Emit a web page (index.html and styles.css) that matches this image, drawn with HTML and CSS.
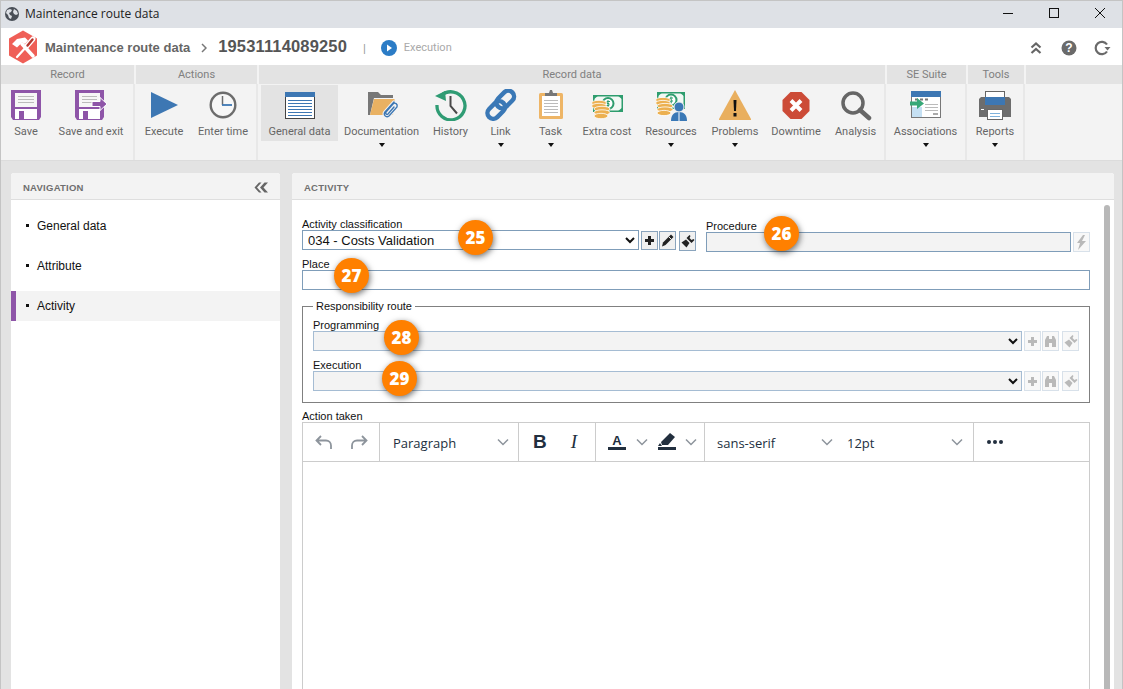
FILE: index.html
```html
<!DOCTYPE html>
<html lang="en">
<head>
<meta charset="utf-8">
<title>Maintenance route data</title>
<link rel="stylesheet" href="styles.css">
</head>
<body>
<div class="window">
  <div class="titlebar">
    <svg class="globe" width="16" height="16" viewBox="0 0 16 16"><circle cx="8" cy="8" r="7" fill="#4a4f57"/><path d="M3 4l3-1 2 1-1 2-2 1 1 2 2 1-1 3-2-1-1-3-2-2zM10 3l3 2 1 3-2 1-2-1-1-2z" fill="#dee1e6"/></svg>
    <span class="title-text">Maintenance route data</span>
    <div class="win-controls">
      <svg width="46" height="24" viewBox="0 0 46 24"><path d="M18 12.500h10" stroke="#111" fill="none"/></svg>
      <svg width="46" height="24" viewBox="0 0 46 24"><rect x="18.500" y="7.500" width="9" height="9" stroke="#111" fill="none"/></svg>
      <svg width="46" height="24" viewBox="0 0 46 24"><path d="M18 7l10 10M28 7l-10 10" stroke="#111" fill="none"/></svg>
    </div>
  </div>
  <div class="header">
    <svg class="logo" width="30" height="34" viewBox="0 0 30 34">
      <path d="M15 0.500l14 8v17l-14 8-14-8v-17z" fill="#ef5f57"/>
      <path d="M4 14l5-5 8-1.500 3 3-3 3.500-3-1.500-3 3-2 2z" fill="#fff"/>
      <path d="M14 14l11 12" stroke="#fff" stroke-width="3.500" stroke-linecap="round"/>
      <path d="M9 27l10-11" stroke="#fff" stroke-width="2.200" stroke-linecap="round"/>
      <path d="M18 17l7-8" stroke="#fff" stroke-width="5" stroke-linecap="round"/>
      <path d="M19.500 15.500l5-6" stroke="#b5372f" stroke-width="2.400" stroke-linecap="round"/>
    </svg>
    <span class="crumb">Maintenance route data</span>
    <svg class="crumb-sep" width="6" height="10" viewBox="0 0 6 10"><path d="M1 1l4 4-4 4" stroke="#777" stroke-width="1.500" fill="none"/></svg>
    <span class="record-id">19531114089250</span>
    <span class="pipe">|</span>
    <svg class="status-icon" width="16" height="16" viewBox="0 0 16 16"><circle cx="8" cy="8" r="8" fill="#2b7cc6"/><path d="M6 4.500l5 3.500-5 3.500z" fill="#fff"/></svg>
    <span class="status-text">Execution</span>
    <div class="header-tools">
      <svg width="14" height="14" viewBox="0 0 14 14"><path d="M2.500 6.500l4.500-4 4.500 4M2.500 12l4.500-4 4.500 4" stroke="#666" stroke-width="2.200" fill="none"/></svg>
      <svg width="16" height="16" viewBox="0 0 16 16"><circle cx="8" cy="8" r="7.500" fill="#6a6a6a"/><text x="8" y="12" class="help-mark">?</text></svg>
      <svg width="18" height="16" viewBox="0 0 18 16"><path d="M14 11.500a6.200 6.200 0 1 1 0-7" stroke="#6a6a6a" stroke-width="2.200" fill="none"/><path d="M11.500 7h6l-3 3.500z" fill="#6a6a6a"/></svg>
    </div>
  </div>

  <div class="ribbon">
    <section class="group g-record">
      <h3>Record</h3>
      <div class="group-body">
        <button class="rb w50"><svg width="32" height="32" viewBox="0 0 32 32"><path d="M1 1h30v27l-2 3H3l-2-3z" fill="#8e55a8"/><rect x="5" y="4" width="22" height="14" fill="#f6f6f6"/><path d="M8 7.500h16M8 10.500h16M8 13.500h16" stroke="#bbb"/><rect x="5" y="20" width="22" height="10" fill="#fff"/><rect x="9" y="22" width="5" height="8" fill="#8e55a8"/></svg><span>Save</span></button>
        <button class="rb w80"><svg width="34" height="32" viewBox="0 0 34 32"><path d="M1 1h29v27l-2 3H3l-2-3z" fill="#8e55a8"/><rect x="5" y="4" width="21" height="14" fill="#f6f6f6"/><path d="M8 7.500h15M8 10.500h15M8 13.500h10" stroke="#bbb"/><rect x="5" y="20" width="21" height="10" fill="#fff"/><rect x="9" y="22" width="5" height="8" fill="#8e55a8"/><path d="M18 12.500h8v-4l7 6.500-7 6.500v-4h-8z" fill="#8e55a8" stroke="#fff"/></svg><span>Save and exit</span></button>
      </div>
    </section>
    <section class="group g-actions">
      <h3>Actions</h3>
      <div class="group-body">
        <button class="rb w56"><svg width="32" height="32" viewBox="0 0 32 32"><path d="M3 3l27 13-27 13z" fill="#3d77b3"/></svg><span>Execute</span></button>
        <button class="rb w62"><svg width="32" height="32" viewBox="0 0 32 32"><circle cx="16" cy="16" r="12.300" fill="#f7f7f7" stroke="#6c6c6c" stroke-width="2.400"/><path d="M15.500 7v9" stroke="#6c6c6c" stroke-width="1.500"/><path d="M15 16h10" stroke="#3d77b3" stroke-width="1.800"/></svg><span>Enter time</span></button>
      </div>
    </section>
    <section class="group g-data">
      <h3>Record data</h3>
      <div class="group-body">
        <button class="rb w77 active"><svg width="32" height="32" viewBox="0 0 32 32"><rect x="1.500" y="3.500" width="29" height="26" fill="#fff" stroke="#444"/><rect x="1" y="3" width="30" height="5" fill="#3d77b3"/><path d="M4 11.500h24M4 14.500h24M4 17.500h24M4 20.500h24M4 23.500h24M4 26.500h24" stroke="#3d77b3"/></svg><span>General data</span></button>
        <button class="rb w87 dd"><svg width="34" height="32" viewBox="0 0 34 32"><path d="M3 3h10l3 3h12v3H9L5 26H3z" fill="#777"/><path d="M9 10h20l1 1-2 15H5z" fill="#e9b162"/><g fill="none" stroke-linecap="round"><path d="M29 13l-9 10c-2 3 1 6 4 4l8-9c1-3-2-5-4-3l-7 8c-1 2 1 3 2 2l6-7" stroke="#f3f3f3" stroke-width="3.500"/><path d="M29 13l-9 10c-2 3 1 6 4 4l8-9c1-3-2-5-4-3l-7 8c-1 2 1 3 2 2l6-7" stroke="#3d77b3" stroke-width="1.400"/></g></svg><span>Documentation</span><i class="caret"></i></button>
        <button class="rb w51"><svg width="32" height="32" viewBox="0 0 32 32"><path d="M6.500 6.500a14 14 0 1 1-4.500 9.500" fill="none" stroke="#2f9c74" stroke-width="3.300"/><path d="M0 7l10-5 1 10z" fill="#2f9c74"/><path d="M15.500 7v10l6.500 7.500" fill="none" stroke="#4a4a4a" stroke-width="2"/></svg><span>History</span></button>
        <button class="rb w49 dd"><svg width="32" height="32" viewBox="0 0 32 32"><g fill="none" stroke="#3a78b6" stroke-width="4.500"><rect x="14.500" y="0.500" width="11.500" height="20" rx="5.700" transform="rotate(45 20.250 10.500)"/><rect x="5.500" y="11" width="11.500" height="20" rx="5.700" transform="rotate(45 11.250 21)"/></g></svg><span>Link</span><i class="caret"></i></button>
        <button class="rb w51 dd"><svg width="32" height="32" viewBox="0 0 32 32"><rect x="4" y="4" width="24" height="26" rx="1.500" fill="#eeb566"/><rect x="7" y="7" width="18" height="20" fill="#fff"/><path d="M9 11.500h14M9 14.500h14M9 17.500h14M9 20.500h14M9 23.500h14" stroke="#bbb"/><path d="M10 7V4h4l1-3h2l1 3h4v3z" fill="#777"/></svg><span>Task</span><i class="caret"></i></button>
        <button class="rb w62"><svg width="34" height="32" viewBox="0 0 34 32"><rect x="3" y="6" width="30" height="17" fill="#2e9d6e"/><rect x="4.500" y="7.500" width="27" height="14" fill="#f2f8f4"/><path d="M3 6h6l-6 5zM33 6h-6l6 5zM3 23h6l-6-5zM33 23h-6l6-5z" fill="#2e9d6e"/><circle cx="18" cy="14.500" r="5.500" fill="#fff" stroke="#2e9d6e" stroke-width="2"/><path d="M20 12.500h-3v2h2v2h-3M18 11v7" stroke="#2e9d6e" fill="none"/><g fill="#ecb050" stroke="#fff" stroke-width=".8"><ellipse cx="9" cy="14" rx="7.500" ry="2.700"/><ellipse cx="9" cy="17" rx="7.500" ry="2.700"/><ellipse cx="12" cy="20" rx="8" ry="2.700"/><ellipse cx="12" cy="23.500" rx="8" ry="2.700"/><ellipse cx="11" cy="27" rx="7" ry="2.700"/></g></svg><span>Extra cost</span></button>
        <button class="rb w66 dd"><svg width="34" height="32" viewBox="0 0 34 32"><rect x="3" y="3" width="28" height="17" fill="#2e9d6e"/><rect x="4.500" y="4.500" width="25" height="14" fill="#f2f8f4"/><path d="M3 3h6l-6 5zM31 3h-6l6 5z" fill="#2e9d6e"/><circle cx="17" cy="11" r="5.500" fill="#fff" stroke="#2e9d6e" stroke-width="2"/><path d="M19 9h-3v2h2v2h-3M17 7.500v7" stroke="#2e9d6e" fill="none"/><g fill="#ecb050" stroke="#fff" stroke-width=".8"><ellipse cx="9" cy="11" rx="7.500" ry="2.600"/><ellipse cx="9" cy="14" rx="7.500" ry="2.600"/><ellipse cx="11" cy="17" rx="8" ry="2.600"/><ellipse cx="11" cy="20.500" rx="8" ry="2.600"/><ellipse cx="10" cy="24" rx="7" ry="2.600"/></g><circle cx="25" cy="18" r="5" fill="#3a78b6" stroke="#f3f3f3"/><path d="M17 32c0-6 3-9 8-9s8 3 8 9z" fill="#3a78b6"/><path d="M25 23v9" stroke="#fff"/></svg><span>Resources</span><i class="caret"></i></button>
        <button class="rb w62 dd"><svg width="32" height="32" viewBox="0 0 32 32"><path d="M16 1l16 29c0 1 0 1-1 1H1c-1 0-1 0-1-1z" fill="#e9af5e"/><path d="M14.500 11h3l-.5 11h-2z" fill="#111"/><rect x="14.500" y="24" width="3" height="3.500" fill="#111"/></svg><span>Problems</span><i class="caret"></i></button>
        <button class="rb w60"><svg width="32" height="32" viewBox="0 0 32 32"><path d="M10.500 3h11l8 8v11l-8 8h-11l-8-8V11z" fill="#cc4b37"/><path d="M11 11.500l10 10M21 11.500l-10 10" stroke="#fff" stroke-width="4"/></svg><span>Downtime</span></button>
        <button class="rb w59"><svg width="32" height="32" viewBox="0 0 32 32"><circle cx="13" cy="14" r="10" fill="none" stroke="#666" stroke-width="3.500"/><path d="M20 21l9 8" stroke="#666" stroke-width="4.500" stroke-linecap="round"/></svg><span>Analysis</span></button>
      </div>
    </section>
    <section class="group g-suite">
      <h3>SE Suite</h3>
      <div class="group-body">
        <button class="rb w77 dd"><svg width="32" height="32" viewBox="0 0 32 32"><rect x="1.500" y="2.500" width="29" height="26" fill="#fff" stroke="#777"/><rect x="1" y="2" width="30" height="6" fill="#3d77b3"/><rect x="2" y="18" width="10" height="10" fill="#c5e0f3"/><path d="M5 10.500h3M10 10.500h3M15 10.500h3" stroke="#777" stroke-width="2"/><path d="M15 15.500h13M15 18.500h13M15 21.500h13" stroke="#bbb"/><rect x="23" y="24" width="5" height="2" fill="#aaa"/><path d="M0 12.500h7V9l7 5.500-7 5.500v-3.500H0z" fill="#37a878"/></svg><span>Associations</span><i class="caret"></i></button>
      </div>
    </section>
    <section class="group g-tools">
      <h3>Tools</h3>
      <div class="group-body">
        <button class="rb w54 dd"><svg width="32" height="32" viewBox="0 0 32 32"><rect x="6.500" y="2.500" width="19" height="10" fill="#fff" stroke="#666"/><path d="M2 8h28l2 2v18H0V10z" fill="#6d6d6d"/><path d="M6 8h20v8H6z" fill="#3d77b3"/><rect x="2" y="20" width="3" height="1" fill="#fff"/><rect x="8.500" y="20.500" width="15" height="10" fill="#fff" stroke="#666"/><path d="M11 24.500h10M11 27.500h10" stroke="#7fb2dc"/></svg><span>Reports</span><i class="caret"></i></button>
      </div>
    </section>
    <section class="group g-rest">
      <h3>&nbsp;</h3>
      <div class="group-body"></div>
    </section>
  </div>

  <div class="main">
    <aside class="panel nav">
      <div class="panel-head"><span>NAVIGATION</span>
        <svg width="14" height="11" viewBox="0 0 14 11"><path d="M5 0.500L0.500 5.500 5 10.500h2.500L3 5.500l4.500-5zM10.500 0.500L6 5.500l4.500 5H14L9.500 5.500l4.500-5z" fill="#666"/></svg>
      </div>
      <ul class="nav-list">
        <li>General data</li>
        <li>Attribute</li>
        <li class="current">Activity</li>
      </ul>
    </aside>

    <section class="panel activity">
      <div class="panel-head"><span>ACTIVITY</span></div>
      <div class="scrollbar"></div>
      <div class="form">
        <div class="row-top">
          <div class="col-class">
            <label>Activity classification</label>
            <div class="ctl-line">
              <select class="field sel-class"><option>034 - Costs Validation</option></select>
              <button class="mini"><svg width="11" height="11" viewBox="0 0 11 11"><path d="M4 1h3v3h3v3H7v3H4V7H1V4h3z" fill="#222"/></svg></button>
              <button class="mini"><svg width="13" height="13" viewBox="0 0 13 13"><path d="M10 0.500l2.500 2.500L4.500 11 1 12.500 2 8.500z" fill="#222"/><path d="M8 3l2.500 2.500" stroke="#f0f0f0"/></svg></button>
              <button class="mini gap"><svg width="14" height="14" viewBox="0 0 14 14"><path d="M8.500 1l1 1-1 2 2 2 2-1 1 1-3 3-5-5z" fill="#222"/><path d="M5 5.500l3.500 3.500-3 4.500-5-5z" fill="#222"/></svg></button>
            </div>
          </div>
          <div class="col-proc">
            <label>Procedure</label>
            <div class="ctl-line">
              <input class="field dim grow" type="text">
              <button class="mini off"><svg width="11" height="15" viewBox="0 0 11 15"><path d="M7 0L1 8h3l-2 7 8-9H6l3-6z" fill="#b9b9b9"/></svg></button>
            </div>
          </div>
        </div>
        <div class="row-place">
          <label>Place</label>
          <input class="field place" type="text">
        </div>
        <fieldset class="route">
          <legend>Responsibility route</legend>
          <div class="route-row">
            <label>Programming</label>
            <div class="ctl-line">
              <select class="field dim pale grow"><option></option></select>
              <button class="mini off"><svg width="11" height="11" viewBox="0 0 11 11"><path d="M4 1h3v3h3v3H7v3H4V7H1V4h3z" fill="#b9b9b9"/></svg></button>
              <button class="mini off"><svg width="13" height="13" viewBox="0 0 13 13"><path d="M1 12V5l2-4h2v11zM8 12V1h2l2 4v7zM5 4h3v4H5z" fill="#b9b9b9"/></svg></button>
              <button class="mini off gap"><svg width="14" height="14" viewBox="0 0 14 14"><path d="M8.500 1l1 1-1 2 2 2 2-1 1 1-3 3-5-5z" fill="#b9b9b9"/><path d="M5 5.500l3.500 3.500-3 4.500-5-5z" fill="#b9b9b9"/></svg></button>
            </div>
          </div>
          <div class="route-row">
            <label>Execution</label>
            <div class="ctl-line">
              <select class="field dim pale grow"><option></option></select>
              <button class="mini off"><svg width="11" height="11" viewBox="0 0 11 11"><path d="M4 1h3v3h3v3H7v3H4V7H1V4h3z" fill="#b9b9b9"/></svg></button>
              <button class="mini off"><svg width="13" height="13" viewBox="0 0 13 13"><path d="M1 12V5l2-4h2v11zM8 12V1h2l2 4v7zM5 4h3v4H5z" fill="#b9b9b9"/></svg></button>
              <button class="mini off gap"><svg width="14" height="14" viewBox="0 0 14 14"><path d="M8.500 1l1 1-1 2 2 2 2-1 1 1-3 3-5-5z" fill="#b9b9b9"/><path d="M5 5.500l3.500 3.500-3 4.500-5-5z" fill="#b9b9b9"/></svg></button>
            </div>
          </div>
        </fieldset>
        <div class="row-action">
          <label>Action taken</label>
          <div class="editor">
            <div class="toolbar">
              <div class="tb-group tb-history">
                <svg width="20" height="18" viewBox="0 0 20 18"><path d="M7 3L2.500 7.500 7 12M3 7.500h9a5 5 0 0 1 5 5V16" fill="none" stroke="#8d949c" stroke-width="1.800"/></svg>
                <svg width="20" height="18" viewBox="0 0 20 18"><path d="M13 3l4.500 4.500L13 12M17 7.500H8a5 5 0 0 0-5 5V16" fill="none" stroke="#8d949c" stroke-width="1.800"/></svg>
              </div>
              <div class="tb-group tb-para"><span>Paragraph</span><svg class="chev" width="12" height="8" viewBox="0 0 12 8"><path d="M1 1.500l5 5 5-5" fill="none" stroke="#8d949c" stroke-width="1.500"/></svg></div>
              <div class="tb-group tb-format">
                <b class="bold">B</b><i class="ital">I</i>
              </div>
              <div class="tb-group tb-color">
                <svg width="20" height="20" viewBox="0 0 20 20"><text x="10" y="13" class="a-mark">A</text><rect x="1" y="15" width="18" height="3" fill="#222f3e"/></svg>
                <svg class="chev c1" width="12" height="8" viewBox="0 0 12 8"><path d="M1 1.500l5 5 5-5" fill="none" stroke="#8d949c" stroke-width="1.500"/></svg>
                <svg class="hl" width="20" height="20" viewBox="0 0 20 20"><path d="M13 1l5 4-7 8H5l-1-3zM3 11l2 3H1z" fill="#222f3e"/><rect x="1" y="15" width="18" height="3" fill="#222f3e"/></svg>
                <svg class="chev c1" width="12" height="8" viewBox="0 0 12 8"><path d="M1 1.500l5 5 5-5" fill="none" stroke="#8d949c" stroke-width="1.500"/></svg>
              </div>
              <div class="tb-group tb-font">
                <span class="font-name">sans-serif</span><svg class="chev" width="12" height="8" viewBox="0 0 12 8"><path d="M1 1.500l5 5 5-5" fill="none" stroke="#8d949c" stroke-width="1.500"/></svg>
                <span class="font-size">12pt</span><svg class="chev" width="12" height="8" viewBox="0 0 12 8"><path d="M1 1.500l5 5 5-5" fill="none" stroke="#8d949c" stroke-width="1.500"/></svg>
              </div>
              <div class="tb-group tb-more"><svg width="18" height="6" viewBox="0 0 18 6"><circle cx="3" cy="3" r="2" fill="#222f3e"/><circle cx="9" cy="3" r="2" fill="#222f3e"/><circle cx="15" cy="3" r="2" fill="#222f3e"/></svg></div>
            </div>
          </div>
        </div>
      </div>
      <span class="badge b25">25</span>
      <span class="badge b26">26</span>
      <span class="badge b27">27</span>
      <span class="badge b28">28</span>
      <span class="badge b29">29</span>
    </section>
  </div>
</div>
</body>
</html>
```
FILE: styles.css
```css
* { box-sizing: border-box; }
html, body { margin: 0; padding: 0; height: 100%; overflow: hidden; }
body { font-family: "Liberation Sans", Arial, sans-serif; background: #e3e3e3; color: #111; }
.window { height: 689px; border: 1px solid #c4c4c4; border-bottom: 0; display: flex; flex-direction: column; overflow: hidden; background: #e3e3e3; }

.titlebar { height: 27px; flex: none; background: #dee1e6; display: flex; align-items: center; padding: 0 0 2px 3px; }
.globe { flex: none; }
.title-text { margin-left: 5px; font: 12px "Open Sans", sans-serif; color: #222; }
.win-controls { margin: -2px -1px 0 auto; display: flex; }
.win-controls svg { display: block; }

.header { height: 37px; flex: none; background: #fff; display: flex; align-items: center; padding: 2px 0 0 7px; }
.logo { flex: none; margin-top: -2px; }
.crumb { margin-left: 7px; font-size: 13px; font-weight: bold; color: #666; }
.crumb-sep { margin-left: 11px; }
.record-id { margin-left: 11px; font-size: 16.500px; letter-spacing: .15px; font-weight: bold; color: #555; position: relative; top: -1px; }
.pipe { margin-left: 16px; font-size: 11px; color: #999; }
.status-icon { margin-left: 15px; }
.status-text { margin-left: 7px; font: 11px Roboto, sans-serif; color: #a9a9a9; }
.header-tools { margin-left: auto; display: flex; align-items: center; gap: 18px; padding-right: 11px; }
.header-tools svg:nth-child(2) { margin-right: -2px; }
.help-mark { font: bold 12px "Liberation Sans", sans-serif; fill: #fff; text-anchor: middle; }

.ribbon { height: 96px; flex: none; display: flex; background: #f3f3f3; border-bottom: 1px solid #dcdcdc; }
.group { display: flex; flex-direction: column; flex: none; }
.group h3 { margin: 0 2px 0 0; height: 19px; flex: none; background: #e3e3e3; font: 11px/19px Roboto, sans-serif; color: #808080; text-align: center; }
.group-body { flex: 1; display: flex; margin-right: 1px; border-right: 2px solid #e8e8e8; align-items: flex-start; padding-top: 1px; }
.g-record { width: 135px; }
.g-actions { width: 123px; }
.g-data { width: 628px; }
.g-data .group-body { padding-left: 2px; }
.g-suite { width: 81px; }
.g-tools { width: 58px; }
.g-rest { flex: 1; }
.g-rest h3 { margin-right: 0; }
.g-rest .group-body { border: 0; margin: 0; }

.rb { border: 0; background: none; padding: 4px 0 0; height: 56px; display: flex; flex-direction: column; align-items: center; font: 11px Roboto, sans-serif; color: #666; position: relative; flex: none; }
.rb svg { display: block; height: 32px; flex: none; }
.rb span { margin-top: 4px; white-space: nowrap; line-height: 13px; }
.rb.active { background: #e3e3e3; }
.caret { position: absolute; top: 58px; left: 50%; margin-left: -3px; width: 0; height: 0; border: 3px solid transparent; border-top: 4px solid #111; border-bottom: 0; }
.w49 { width: 49px; } .w50 { width: 50px; } .w51 { width: 51px; } .w54 { width: 54px; }
.w56 { width: 56px; } .w59 { width: 59px; } .w60 { width: 60px; } .w62 { width: 62px; }
.w66 { width: 66px; } .w77 { width: 77px; } .w80 { width: 80px; } .w87 { width: 87px; }

.main { flex: 1; min-height: 0; display: flex; gap: 12px; padding: 12px 8px 0 10px; }
.panel { background: #fff; border-radius: 3px 3px 0 0; display: flex; flex-direction: column; }
.nav { width: 269px; flex: none; }
.activity { flex: 1; position: relative; min-width: 0; }
.panel-head { height: 27px; flex: none; background: #f3f3f3; border-bottom: 1px solid #dedede; display: flex; align-items: center; justify-content: space-between; padding: 2px 12px 0; font-size: 9.500px; font-weight: bold; color: #6f6f6f; letter-spacing: .25px; border-radius: 3px 3px 0 0; }
.nav-list { list-style: none; margin: 0; padding: 6px 0 0; }
.nav-list li { height: 40px; font-size: 12px; color: #111; display: flex; align-items: center; padding-left: 26px; position: relative; }
.nav-list li::before { content: ""; position: absolute; left: 15px; top: 18px; width: 3px; height: 3px; background: #111; }
.nav-list .current { height: 30px; margin-top: 5px; background: #f3f3f3; border-left: 5px solid #8e55a8; padding-left: 21px; }
.nav-list .current::before { left: 10px; top: 13px; }

.scrollbar { position: absolute; right: 4px; top: 32px; bottom: 0; width: 6px; background: #b8b8b8; border-radius: 3px 3px 0 0; }
.form { padding: 18px 24px 0 10px; display: flex; flex-direction: column; }
label { display: block; font-size: 11px; line-height: 12px; color: #111; white-space: nowrap; }
.ctl-line { display: flex; align-items: flex-start; }
.field { height: 20px; border: 1px solid #7f9db9; background: #fff; padding: 0; margin: 0; border-radius: 0; font: 12px "Liberation Sans", sans-serif; color: #111; display: block; }
.dim { background: #f3f3f3; }
.pale { border-color: #a5bcd3; }
.grow { flex: 1; min-width: 0; }
.row-top { display: flex; }
.col-class { width: 404px; flex: none; }
.sel-class { width: 337px; padding-left: 1px; font-size: 13px; }
.col-proc { flex: 1; min-width: 0; padding-top: 1px; }
.col-proc label { margin-top: 1px; }
.mini { width: 17px; height: 19px; margin: 1px 0 0 2px; padding: 0; border: 1px solid #8aa4bd; background: #f0f0f0; display: flex; align-items: center; justify-content: center; flex: none; }
.mini + .mini { margin-left: 1px; }
.mini.gap { margin-left: 3px; height: 20px; }
.off { border-color: #d8e1ea; background: #f8f8f8; margin-top: 0; height: 20px; width: 17px; }
.row-place { margin-top: 6px; }
.place { width: 100%; }
.route { margin: 10px 0 0; padding: 7px 10px 0; height: 103px; border: 1px solid #808080; min-width: 0; position: relative; }
.route legend { padding: 0 3px; margin-left: 0; font-size: 11px; line-height: 12px; color: #111; }
.route-row { margin-bottom: 8px; }
.row-action { margin-top: 7px; }
.editor { border: 1px solid #ccc; height: 300px; }
.toolbar { height: 39px; border-bottom: 1px solid #ccc; display: flex; font: 13px "Open Sans", sans-serif; color: #222f3e; }
.toolbar span { margin-top: 2px; }
.tb-group { display: flex; align-items: center; border-right: 1px solid #ccc; flex: none; }
.tb-history { width: 77px; padding-left: 11px; gap: 15px; }
.tb-para { width: 139px; padding-left: 13px; }
.tb-para .chev { margin-left: 41px; }
.tb-format { width: 77px; padding-left: 14px; font-size: 18px; }
.bold { font: bold 19px "Liberation Sans", sans-serif; }
.ital { font: italic 19px "Liberation Serif", serif; margin-left: 24px; }
.tb-color { width: 109px; padding-left: 11px; }
.tb-color .c1 { margin-left: 9px; }
.tb-color .hl { margin-left: 9px; }
.tb-color .hl + .c1 { margin-left: 8px; }
.a-mark { font: bold 13px "Liberation Sans", sans-serif; fill: #222f3e; text-anchor: middle; }
.tb-font { width: 269px; padding-left: 12px; }
.tb-font .font-name { width: 104px; }
.tb-font .font-size { margin-left: 14px; width: 104px; }
.tb-more { flex: 1; border-right: 0; padding-left: 12px; }

.badge { position: absolute; width: 35px; height: 35px; border-radius: 50%; background: #ff8000; color: #fff; font: 800 17px/35px "Open Sans", sans-serif; text-align: center; box-shadow: 1px 2px 6px rgba(0,0,0,.55); }
.b25 { left: 166px; top: 47px; }
.b26 { left: 472px; top: 43px; }
.b27 { left: 42px; top: 85px; }
.b28 { left: 92px; top: 147px; }
.b29 { left: 90px; top: 188px; }
```
